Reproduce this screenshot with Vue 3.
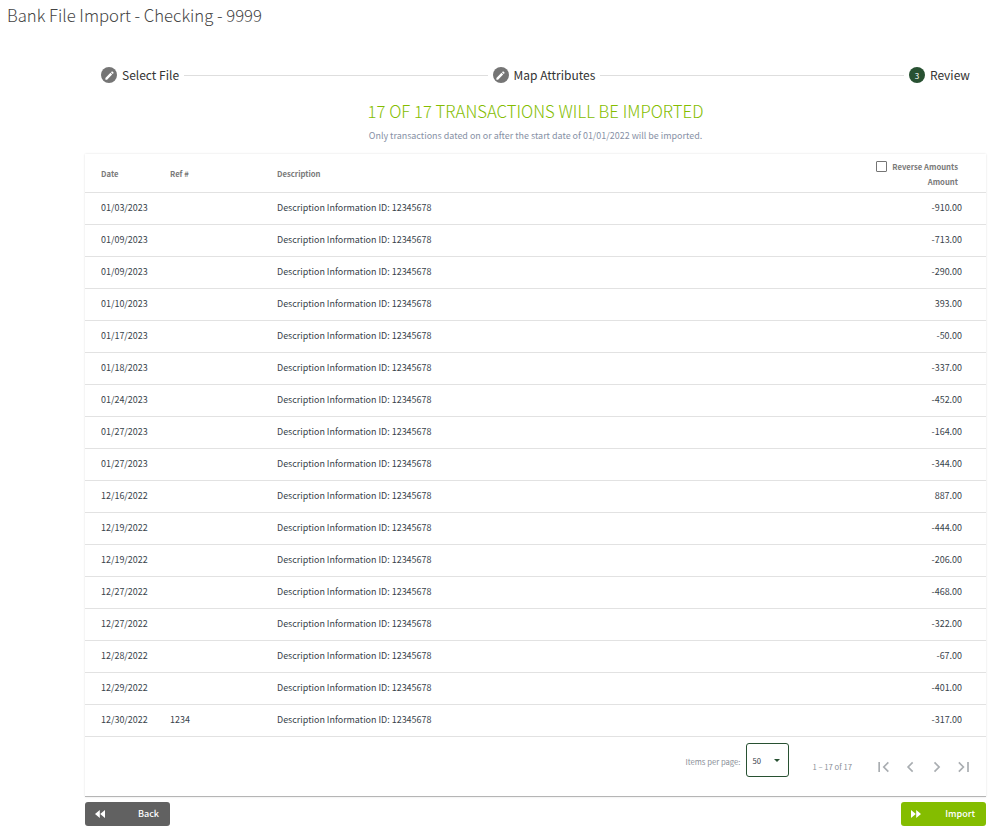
<template>
  <div class="page">
    <h1 class="page-title">Bank File Import - Checking - 9999</h1>

    <div class="content">
      <!-- stepper -->
      <div class="stepper">
        <div class="step">
          <span class="step-icon">
            <svg viewBox="0 0 24 24" width="11" height="11"><path fill="#fff" d="M3 17.25V21h3.75L17.81 9.94l-3.75-3.75L3 17.25zM20.71 7.04a1 1 0 0 0 0-1.41l-2.34-2.34a1 1 0 0 0-1.41 0l-1.83 1.83 3.75 3.75 1.83-1.83z"/></svg>
          </span>
          <span class="step-label">Select File</span>
        </div>
        <div class="step-line"></div>
        <div class="step">
          <span class="step-icon">
            <svg viewBox="0 0 24 24" width="11" height="11"><path fill="#fff" d="M3 17.25V21h3.75L17.81 9.94l-3.75-3.75L3 17.25zM20.71 7.04a1 1 0 0 0 0-1.41l-2.34-2.34a1 1 0 0 0-1.41 0l-1.83 1.83 3.75 3.75 1.83-1.83z"/></svg>
          </span>
          <span class="step-label">Map Attributes</span>
        </div>
        <div class="step-line"></div>
        <div class="step">
          <span class="step-icon current">3</span>
          <span class="step-label">Review</span>
        </div>
      </div>

      <h2 class="summary">17 OF 17 TRANSACTIONS WILL BE IMPORTED</h2>
      <p class="note">Only transactions dated on or after the start date of 01/01/2022 will be imported.</p>

      <!-- table -->
      <div class="card">
        <div class="row head">
          <div class="col-date">Date</div>
          <div class="col-ref">Ref #</div>
          <div class="col-desc">Description</div>
          <div class="col-amount head-amount">
            <label class="reverse"><span class="checkbox"></span>Reverse Amounts</label>
            <div>Amount</div>
          </div>
        </div>
        <div class="row" v-for="(t, i) in transactions" :key="i">
          <div class="col-date">{{ t.date }}</div>
          <div class="col-ref">{{ t.ref }}</div>
          <div class="col-desc">Description Information ID: 12345678</div>
          <div class="col-amount">{{ t.amount }}</div>
        </div>

        <div class="paginator">
          <span class="per-page">Items per page:</span>
          <div class="select">
            <span>50</span>
            <span class="caret"></span>
          </div>
          <span class="range">1 – 17 of 17</span>
          <div class="pager">
            <svg viewBox="0 0 24 24" width="20" height="20"><path fill="none" stroke="#a9adb1" stroke-width="2" d="M5 6v12M16 6.500 10.500 12l5.500 5.500"/></svg>
            <svg viewBox="0 0 24 24" width="20" height="20"><path fill="none" stroke="#a9adb1" stroke-width="2" d="M14 6.500 8.500 12l5.500 5.500"/></svg>
            <svg viewBox="0 0 24 24" width="20" height="20"><path fill="none" stroke="#a9adb1" stroke-width="2" d="M9 6.500 14.500 12 9 17.500"/></svg>
            <svg viewBox="0 0 24 24" width="20" height="20"><path fill="none" stroke="#a9adb1" stroke-width="2" d="M7 6.500 12.500 12 7 17.500M18 6v12"/></svg>
          </div>
        </div>
      </div>

      <div class="actions">
        <button class="btn back">
          <svg viewBox="0 0 12 12" width="12" height="12"><path fill="#fff" d="M5.800 2v8L1 6zM11 2v8L6.200 6z"/></svg>
          <span>Back</span>
        </button>
        <button class="btn import">
          <svg viewBox="0 0 12 12" width="12" height="12"><path fill="#fff" d="M1 2v8l4.800-4zM6.200 2v8L11 6z"/></svg>
          <span>Import</span>
        </button>
      </div>
    </div>
  </div>
</template>

<script setup>
const transactions = [
  { date: '01/03/2023', ref: '', amount: '-910.00' },
  { date: '01/09/2023', ref: '', amount: '-713.00' },
  { date: '01/09/2023', ref: '', amount: '-290.00' },
  { date: '01/10/2023', ref: '', amount: '393.00' },
  { date: '01/17/2023', ref: '', amount: '-50.00' },
  { date: '01/18/2023', ref: '', amount: '-337.00' },
  { date: '01/24/2023', ref: '', amount: '-452.00' },
  { date: '01/27/2023', ref: '', amount: '-164.00' },
  { date: '01/27/2023', ref: '', amount: '-344.00' },
  { date: '12/16/2022', ref: '', amount: '887.00' },
  { date: '12/19/2022', ref: '', amount: '-444.00' },
  { date: '12/19/2022', ref: '', amount: '-206.00' },
  { date: '12/27/2022', ref: '', amount: '-468.00' },
  { date: '12/27/2022', ref: '', amount: '-322.00' },
  { date: '12/28/2022', ref: '', amount: '-67.00' },
  { date: '12/29/2022', ref: '', amount: '-401.00' },
  { date: '12/30/2022', ref: '1234', amount: '-317.00' }
];
</script>

<style>
html, body {
  background: #fff;
}
</style>

<style scoped>
.page {
  height: 837px;
  overflow: hidden;
  box-sizing: border-box;
  font-family: "Noto Sans CJK SC", "Noto Sans", sans-serif;
  color: #333;
}

.page-title {
  margin: 0;
  padding: 3px 0 0 7px;
  height: 30px;
  box-sizing: border-box;
  font-size: 16.7px;
  line-height: 24px;
  font-weight: 300;
  color: #444;
}

.content {
  margin: 0 13px 0 85px;
}

.stepper {
  display: flex;
  align-items: center;
  height: 24px;
  margin: 33px 16px 0 16px;
}

.step {
  display: flex;
  align-items: center;
  gap: 5px;
}

.step-icon {
  width: 16px;
  height: 16px;
  border-radius: 50%;
  background: #757575;
  display: flex;
  align-items: center;
  justify-content: center;
  color: #fff;
  font-size: 8px;
}

.step-icon.current {
  background: #285132;
}

.step-label {
  font-size: 12px;
  line-height: 16px;
  color: #333;
}

.step-line {
  flex: 1;
  height: 1px;
  background: #dedede;
  margin: 0 5px;
}

.summary {
  margin: 12px 0 0;
  height: 24px;
  text-align: center;
  font-size: 16.75px;
  line-height: 24px;
  font-weight: 300;
  color: #84bd00;
}

.note {
  margin: 5px 0 0;
  height: 16px;
  text-align: center;
  font-size: 8.95px;
  line-height: 16px;
  color: #8791a5;
}

.card {
  margin-top: 10px;
  background: #fff;
  border-bottom: 1px solid #b5b5b5;
  box-shadow: 0 0 2px rgba(0, 0, 0, 0.12);
}

.row {
  display: flex;
  align-items: center;
  height: 32px;
  box-sizing: border-box;
  border-bottom: 1px solid #e2e2e2;
  padding: 0 24px 2px 16px;
  font-size: 8.95px;
  line-height: 14px;
  color: #37424a;
}

.row.head {
  height: 39px;
  padding-top: 2px;
  padding-bottom: 0;
  font-weight: 700;
  color: #7a7a7a;
  font-size: 7.7px;
}

.col-date {
  width: 69px;
}

.col-ref {
  width: 107px;
}

.col-desc {
  flex: 1;
}

.col-amount {
  text-align: right;
}

.head-amount {
  margin-right: 4px;
  line-height: 15px;
}

.reverse {
  display: flex;
  align-items: center;
  gap: 5px;
}

.checkbox {
  width: 9px;
  height: 9px;
  border: 1px solid #757575;
  border-radius: 1px;
}

.paginator {
  display: flex;
  align-items: center;
  height: 59px;
  padding-right: 13px;
  font-size: 7.7px;
  color: #8a8f98;
}

.per-page {
  margin-left: auto;
  margin-bottom: 11px;
}

.select {
  width: 43px;
  height: 34px;
  box-sizing: border-box;
  border: 1px solid #285132;
  border-radius: 3px;
  margin: 0 0 13px 5px;
  padding: 0 8px 0 6px;
  display: flex;
  align-items: center;
  justify-content: space-between;
  color: #37424a;
}

.caret {
  width: 0;
  height: 0;
  border-left: 3px solid transparent;
  border-right: 3px solid transparent;
  border-top: 3px solid #285132;
}

.range {
  margin: 0 0 0 24px;
}

.pager {
  display: flex;
  gap: 6px;
  margin: 0 0 0 23px;
}

.actions {
  display: flex;
  justify-content: space-between;
  margin-top: 5px;
}

.btn {
  width: 85px;
  height: 24px;
  border: 0;
  border-radius: 3px;
  padding: 0 11px 0 9px;
  display: flex;
  align-items: center;
  justify-content: space-between;
  color: #fff;
  font-family: inherit;
  font-size: 9px;
  font-weight: 500;
  line-height: 14px;
}

.btn.back {
  background: #616161;
}

.btn.import {
  background: #84bd00;
}
</style>
